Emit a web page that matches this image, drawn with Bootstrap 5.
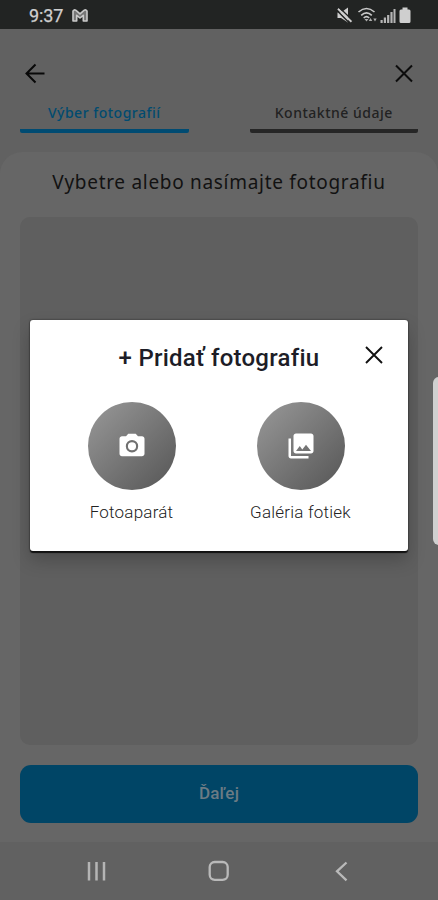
<!DOCTYPE html>
<html lang="sk">
<head>
<meta charset="utf-8">
<meta name="viewport" content="width=device-width, initial-scale=1">
<title>Pridať fotografiu</title>
<link href="https://cdn.jsdelivr.net/npm/bootstrap@5.3.0/dist/css/bootstrap.min.css" rel="stylesheet">
<style>
html, body { height: 100%; }
body { font-family: Roboto, "Liberation Sans", sans-serif; background: #616161; overflow: hidden; }
.screen { width: 438px; height: 900px; }
.status { height: 29px; background: #222423; color: #cfcfcf; padding: 3px 27px 0 29px; }
.clock { font-size: 18px; line-height: 26px; letter-spacing: -.1px; -webkit-text-stroke: .25px #cfcfcf; }
.appbar { height: 74px; padding: 15px 22px 0 23px; }
.steps { padding: 0 20px; height: 49px; }
.step { width: 168.5px; height: 30px; border-bottom: 4px solid #262626; border-radius: 0 0 2px 2px; font: 500 14px/20px "Noto Sans", sans-serif; color: #222; letter-spacing: .5px; white-space: nowrap; }
.step-on { color: #004b70; border-color: #004b72; }
.sheet { background: #666; border-radius: 22px 22px 0 0; padding: 0 20px; height: 690px; }
.sheet h1 { font: 400 19px/26px "Noto Sans", sans-serif; letter-spacing: .7px; color: #121212; padding-top: 17px; height: 65px; margin: 0; white-space: nowrap; }
.photo-area { height: 528px; background: #5f5f5f; border-radius: 10px; }
.next-btn, .next-btn:hover { margin-top: 19.5px; height: 58px; background: #004566; border-radius: 11px; color: #6b7b84; font-size: 17px; font-weight: 500; letter-spacing: .2px; border: 0; }
.sysnav { height: 58px; background: #616161; padding: 0 84px; }
.dialog-box { left: 30px; top: 320px; width: 378px; height: 231px; background: #fff; border-radius: 3px; box-shadow: 0 1.5px 1px #111, 0 0 2px #222, 0 9px 18px rgba(0,0,0,.22); }
.dialog-box h2 { font-size: 24px; line-height: 30px; letter-spacing: .25px; font-weight: 500; color: #1d1d27; padding-top: 23px; height: 82px; margin: 0; white-space: nowrap; }
.dialog-close { right: 23.5px; top: 24px; }
.sources { padding-right: 6px; }
.source { width: 169px; color: #222; }
.disc { width: 88px; height: 88px; background: linear-gradient(135deg, #999, #555); }
.source span { font-size: 17px; line-height: 22px; letter-spacing: .22px; font-weight: 300; margin-top: 11px; white-space: nowrap; }
.edge-handle { right: -7px; top: 377px; width: 12px; height: 168px; background: #d0d0d0; border-radius: 6px; }
svg { display: block; flex: none; }
</style>
<script src="https://cdn.jsdelivr.net/npm/bootstrap@5.3.0/dist/js/bootstrap.bundle.min.js"></script>
</head>
<body>
<div class="screen position-relative overflow-hidden d-flex flex-column">
  <header class="status d-flex justify-content-between align-items-start">
    <div class="d-flex">
      <span class="clock">9:37</span>
      <svg class="ms-2 mt-1" width="18" height="17" viewBox="0 0 18 17"><path d="M2 14V4.200Q3 2 5 3.400L9 6.800l4-3.400q2-1.400 3 .8V14h-3.700V8.300L9 11 5.700 8.300V14Z" fill="#777" stroke="#c9c9c9" stroke-width="1.600" stroke-linejoin="round"/></svg>
    </div>
    <svg width="76" height="22" viewBox="335 3 76 22" fill="#cfcfcf">
      <path d="M337.500 12.500h3.500l7-5v15l-7-4.500h-3.500z"/><path d="M337 10.500l13 13" stroke="#222423" stroke-width="1.500"/><path d="M338 8.800l13.500 13" stroke="#cfcfcf" stroke-width="2"/><path d="M339.500 7.800l13 12.500" stroke="#222423" stroke-width="1.200"/>
      <g fill="none" stroke="#c9c9c9" stroke-width="1.600"><path d="M358.500 12Q366.500 5 374.500 12M361.200 15.300Q366.500 10.300 371.800 15.300M363.700 18Q366.500 15.400 369.200 18"/></g>
      <path d="M364.500 19h4l-2 2.500zM370.500 18l1.800 3h-3.500zM375 21.500l-1.700-3h3.400z" opacity=".8"/>
      <path d="M380.500 20h2.200v3h-2.200zM383.800 17.500h2.200V23h-2.200zM387.100 15h2.200v8h-2.200zM390.400 12h2.200v11h-2.200zM393.500 9h2v14h-2z" opacity=".85"/>
      <path d="M402.500 7.500h5v2h1.500q1.500 0 1.500 1.500v10.500q0 1.500-1.500 1.500h-8q-1.500 0-1.500-1.500V11q0-1.500 1.500-1.500h1.500z"/>
    </svg>
  </header>
  <nav class="appbar d-flex justify-content-between">
    <svg width="24" height="58" viewBox="23 44 24 58" fill="none" stroke="#080808" stroke-width="2"><path d="M44.500 73.500H26.500M35.500 64.500l-9 9 9 9"/></svg>
    <svg width="24" height="58" viewBox="392 44 24 58" fill="none" stroke="#0c0c0c" stroke-width="2"><path d="M396 65.500l16 16M412 65.500l-16 16"/></svg>
  </nav>
  <div class="steps d-flex justify-content-between">
    <div class="step step-on text-center">Výber fotografií</div>
    <div class="step text-center">Kontaktné údaje</div>
  </div>
  <main class="sheet">
    <h1 class="text-center">Vybetre alebo nasímajte fotografiu</h1>
    <div class="photo-area"></div>
    <button class="btn next-btn w-100" type="button">Ďaľej</button>
  </main>
  <footer class="sysnav d-flex justify-content-between align-items-center">
    <svg width="24" height="24" viewBox="84 859 24 24" stroke="#b5b5b5" stroke-width="2.500"><path d="M89 862v18.500M96.500 862v18.500M104 862v18.500"/></svg>
    <svg width="24" height="24" viewBox="0 0 24 24" fill="none" stroke="#b9b9b9" stroke-width="2.300"><rect x="2.700" y="3" width="18" height="17.800" rx="5"/></svg>
    <svg width="24" height="24" viewBox="330 859 24 24" fill="none" stroke="#b9b9b9" stroke-width="2.300"><path d="M346.500 862.500l-9.500 8.800 9.500 9"/></svg>
  </footer>

  <section class="dialog-box position-absolute" role="dialog" aria-label="Pridať fotografiu">
    <h2 class="text-center">+ Pridať fotografiu</h2>
    <svg class="dialog-close position-absolute" width="22" height="22" viewBox="0 0 22 22" fill="none" stroke="#111" stroke-width="1.900"><path d="M3 3l16 16M19 3L3 19"/></svg>
    <div class="sources d-flex justify-content-center">
      <div class="source d-flex flex-column align-items-center">
        <div class="disc rounded-circle d-flex align-items-center justify-content-center">
          <svg width="30" height="30" viewBox="0 .8 24 24"><path fill="#fff" d="M9 3L7.200 5H4c-1 0-2 .8-2 2v12c0 1 .9 2 2 2h16c1 0 2-.9 2-2V7c0-1.100-.9-2-2-2h-3.200L15 3z"/><circle cx="12" cy="13" r="4.100" fill="none" stroke="#707070" stroke-width="1.700"/></svg>
        </div>
        <span>Fotoaparát</span>
      </div>
      <div class="source d-flex flex-column align-items-center">
        <div class="disc rounded-circle d-flex align-items-center justify-content-center">
          <svg width="30" height="30" viewBox="0 0 24 24" fill="#fff"><path d="M22 16V4c0-1.100-.9-2-2-2H8c-1.100 0-2 .9-2 2v12c0 1.100.9 2 2 2h12c1.100 0 2-.9 2-2zm-11-4l2.030 2.710L16 11l4 5H8l3-4zM2 6v14c0 1.100.9 2 2 2h14v-2H4V6H2z"/></svg>
        </div>
        <span>Galéria fotiek</span>
      </div>
    </div>
  </section>
  <div class="edge-handle position-absolute"></div>
</div>
</body>
</html>
